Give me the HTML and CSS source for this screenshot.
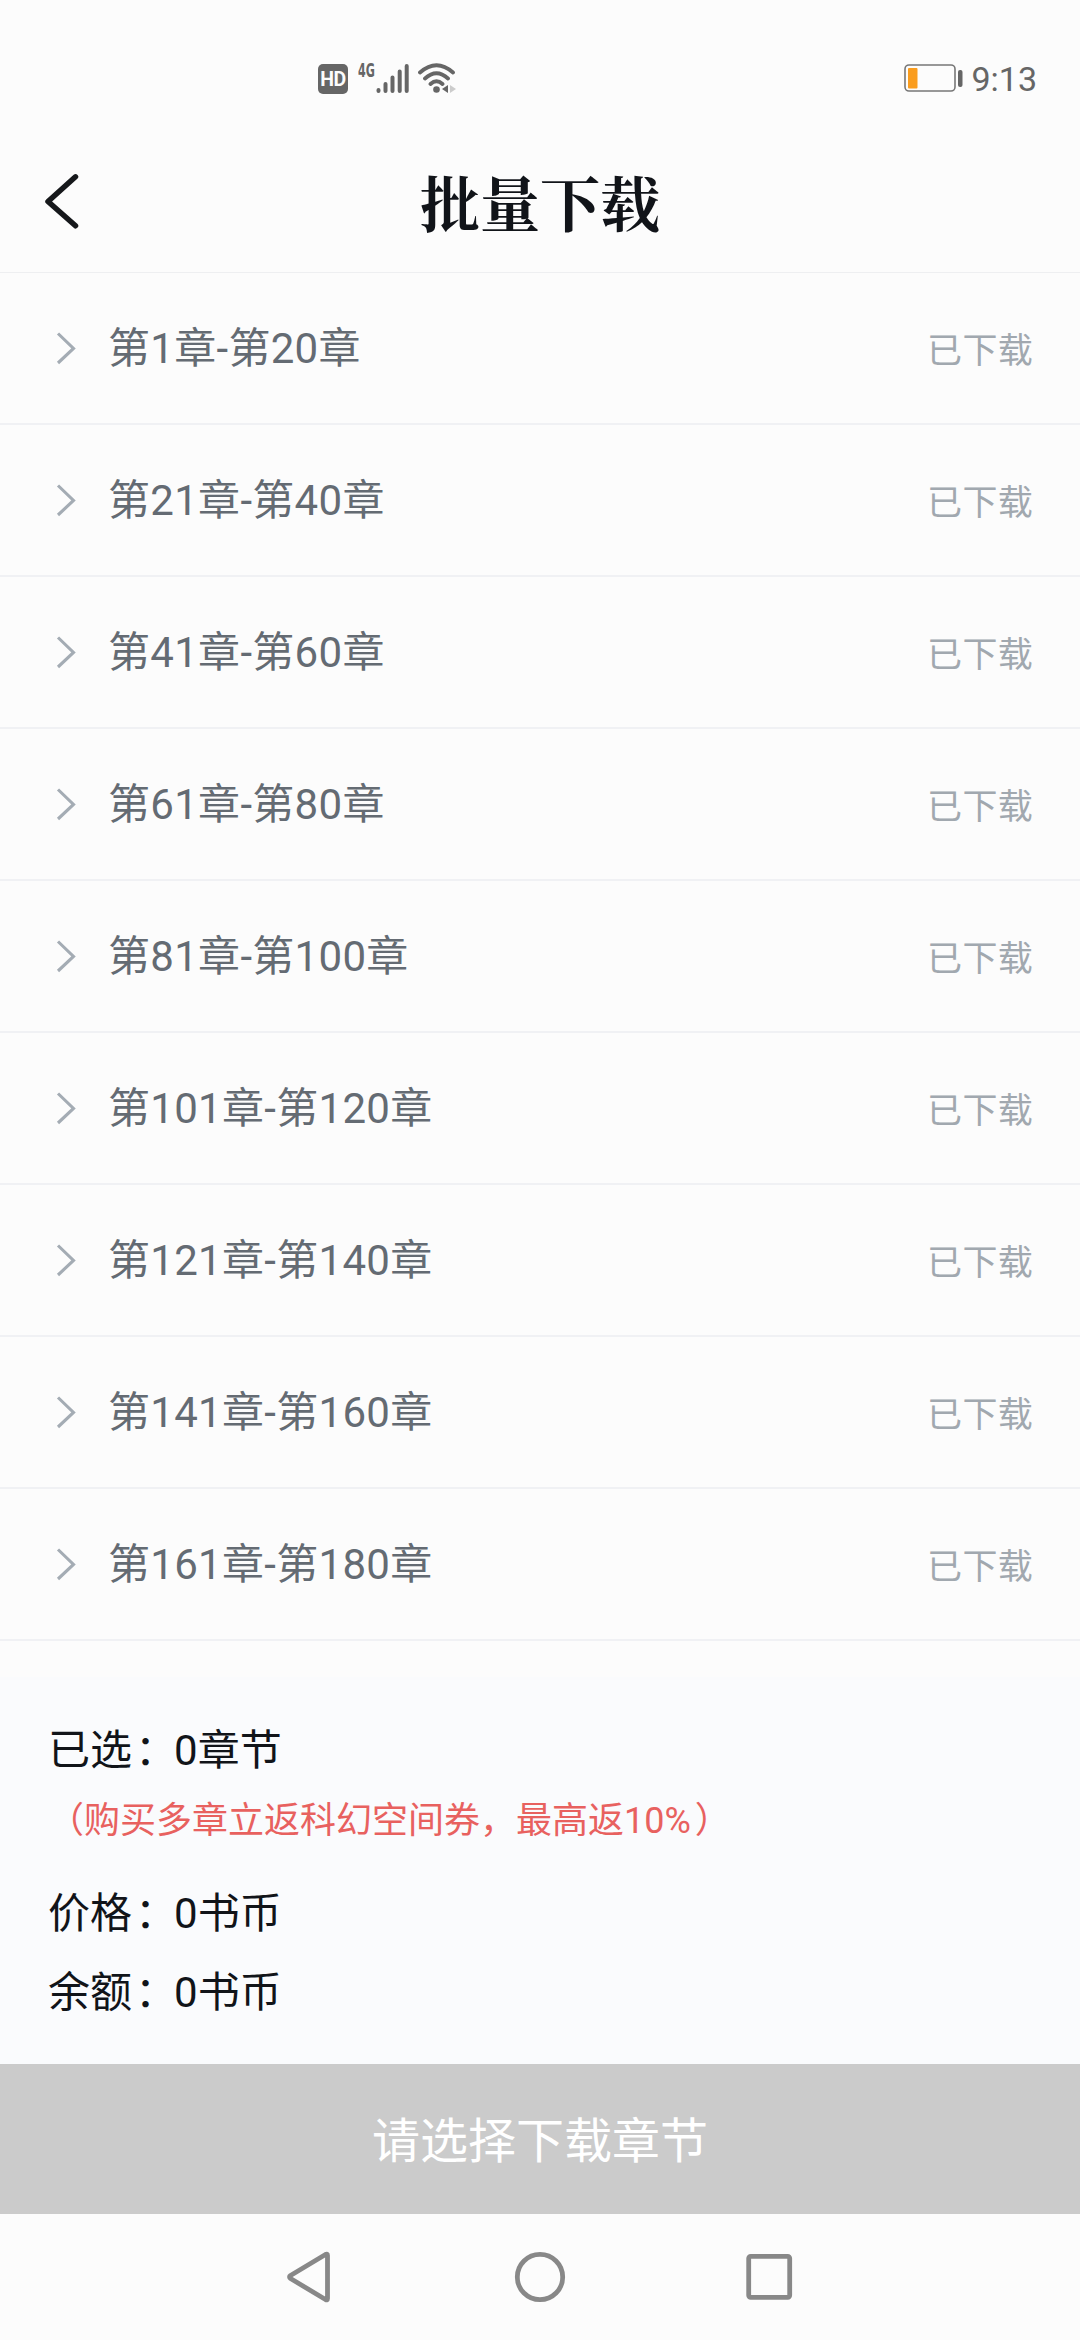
FILE: index.html
```html
<!DOCTYPE html>
<html lang="zh-CN">
<head>
<meta charset="utf-8">
<title>批量下载</title>
<link rel="stylesheet" href="styles.css">
</head>
<body>
<svg class="defs" width="0" height="0" aria-hidden="true">
  <symbol id="chevron" viewBox="0 0 20 34"><path d="M2 2.500 17.500 17.500 2 32"/></symbol>
</svg>
<div class="screen">
  <div class="status">
    <div class="signals">
      <span class="hd">HD</span>
      <span class="net">4G</span>
      <svg class="bars" width="33" height="31" viewBox="0 0 33 31"><path d="M2.500 27v1M9.500 21v7M16.500 14.500v13.500M23.700 8.500v19.500M30.700 3v25"/></svg>
      <svg class="wifi" width="38" height="31" viewBox="0 0 38 31">
        <path class="arc" d="M2 9.500Q18.500-5 35 9.500M7 15.500Q18.500 5 30 15.500M12.500 21Q18.500 15.500 24.500 21"/>
        <circle cx="18.500" cy="26.500" r="3.300"/>
        <path d="M30 22v8l-6-4z"/><path class="faint" d="M32 22v8l6-4z"/>
      </svg>
    </div>
    <div class="power">
      <svg width="60" height="29" viewBox="0 0 60 29">
        <rect class="case" x="1" y="1" width="50" height="26" rx="4"/>
        <rect class="charge" x="4" y="4" width="9.500" height="20.500" rx="1"/>
        <rect class="cap" x="54" y="6" width="4.500" height="17" rx="2"/>
      </svg>
      <span class="time">9:13</span>
    </div>
  </div>
  <header class="header">
    <svg class="back" width="40" height="60" viewBox="0 0 40 60"><path d="M36.500 5.800 9 30.500 36.500 54.800"/></svg>
    <h1>批量下载</h1>
  </header>
  <ul class="list">
    <li><svg class="chev"><use href="#chevron"/></svg><span class="range">第1章-第20章</span><span class="state">已下载</span></li>
    <li><svg class="chev"><use href="#chevron"/></svg><span class="range">第21章-第40章</span><span class="state">已下载</span></li>
    <li><svg class="chev"><use href="#chevron"/></svg><span class="range">第41章-第60章</span><span class="state">已下载</span></li>
    <li><svg class="chev"><use href="#chevron"/></svg><span class="range">第61章-第80章</span><span class="state">已下载</span></li>
    <li><svg class="chev"><use href="#chevron"/></svg><span class="range">第81章-第100章</span><span class="state">已下载</span></li>
    <li><svg class="chev"><use href="#chevron"/></svg><span class="range">第101章-第120章</span><span class="state">已下载</span></li>
    <li><svg class="chev"><use href="#chevron"/></svg><span class="range">第121章-第140章</span><span class="state">已下载</span></li>
    <li><svg class="chev"><use href="#chevron"/></svg><span class="range">第141章-第160章</span><span class="state">已下载</span></li>
    <li><svg class="chev"><use href="#chevron"/></svg><span class="range">第161章-第180章</span><span class="state">已下载</span></li>
  </ul>
  <section class="summary">
    <p class="line">已选<span class="colon">：</span>0章节</p>
    <p class="promo">（购买多章立返科幻空间券，最高返10%<span class="close">）</span></p>
    <p class="line">价格<span class="colon">：</span>0书币</p>
    <p class="line">余额<span class="colon">：</span>0书币</p>
  </section>
  <button class="submit">请选择下载章节</button>
  <nav class="nav">
    <svg width="60" height="60" viewBox="0 0 60 60"><path d="M47.500 8.500Q47.500 6.500 45.500 7.500L10.500 28.500Q8.500 30 10.500 31.500L45.500 52.500Q47.500 53.500 47.500 51.500z"/></svg>
    <svg width="60" height="60" viewBox="0 0 60 60"><circle cx="30" cy="30" r="22.700"/></svg>
    <svg width="60" height="60" viewBox="0 0 60 60"><rect x="9.700" y="9.300" width="41" height="41" rx="2"/></svg>
  </nav>
</div>
</body>
</html>
```
FILE: styles.css
```css
* { box-sizing: border-box; }

body {
  margin: 0;
  background: #fcfcfc;
  font-family: Roboto, "Noto Sans CJK SC", sans-serif;
}

.defs { display: block; }

.screen {
  width: 1080px;
  height: 2340px;
  display: flex;
  flex-direction: column;
  overflow: hidden;
}

.status {
  height: 130px;
  padding: 0 43px 0 318px;
  display: flex;
  justify-content: space-between;
  color: #666;
}

.signals { display: flex; padding-top: 63px; }

.hd {
  width: 30px;
  height: 30px;
  margin-top: 1px;
  border-radius: 5px;
  background: #666;
  color: #fcfcfc;
  font: bold 19.5px/31px Roboto, sans-serif;
  text-align: center;
  letter-spacing: -0.5px;
}

.net {
  width: 17px;
  height: 14px;
  margin-left: 10px;
  font: bold 19px/15px "DejaVu Sans Condensed", "DejaVu Sans", sans-serif;
  transform: scaleX(0.65);
  transform-origin: left;
}

.bars { margin-left: 1px; fill: none; stroke: #666; stroke-width: 4; stroke-linecap: round; }
.wifi { margin-left: 9px; fill: #666; }
.wifi .arc { fill: none; stroke: #666; stroke-width: 3.8; stroke-linecap: round; }
.wifi .faint { fill: #ccc; }

.power { display: flex; padding-top: 64px; }
.power .case { fill: none; stroke: #777; stroke-width: 1.6; }
.power .charge { fill: #fa9d1e; }
.power .cap { fill: #666; }
.time { margin-left: 7px; font-size: 34px; line-height: 30px; }

.header {
  height: 143px;
  border-bottom: 1px solid #eeeff1;
  display: grid;
  grid-template-columns: 120px 1fr 120px;
  align-items: center;
}

.back {
  margin-left: 39px;
  fill: none;
  stroke: #16181b;
  stroke-width: 5.5;
  stroke-linecap: round;
  stroke-linejoin: round;
}

.header h1 {
  margin: 0;
  text-align: center;
  color: #111419;
  font: bold 60px/80px "Noto Serif CJK SC", "Noto Serif SC", "Source Han Serif SC", "Noto Sans CJK SC", serif;
}

.list { list-style: none; margin: 0; padding: 0; height: 1404px; }

.list li {
  height: 152px;
  padding: 0 47px 0 56px;
  border-bottom: 2px solid #f0f1f4;
  display: flex;
  align-items: center;
}

.chev {
  width: 20px;
  height: 34px;
  fill: none;
  stroke: #a4acb4;
  stroke-width: 3.1;
}

.range {
  flex: 1;
  margin-left: 32px;
  padding-bottom: 8px;
  color: #646b73;
  font-size: 42px;
  letter-spacing: 0.3px;
}

.state { color: #a1a8af; font-size: 35px; letter-spacing: 0.3px; padding-bottom: 2px; }

.summary {
  height: 387px;
  padding: 42px 48px 0;
  background: #fafbfd;
}

.summary p { margin: 0; }
.line { height: 79px; color: #111419; font-size: 42px; line-height: 64px; }
.colon { margin: 0 -3px 0 3px; }
.promo { height: 84px; margin: 0; color: #e8615f; font-size: 36px; line-height: 46px; }
.close { margin-left: 4px; }

.submit {
  height: 150px;
  padding: 6px 0 0;
  border: 0;
  background: #cbcbcb;
  color: #fff;
  font: 48px/144px Roboto, "Noto Sans CJK SC", sans-serif;
}

.nav {
  flex: 1;
  padding: 0 281px 0 280px;
  display: flex;
  align-items: center;
  justify-content: space-between;
}

.nav svg { fill: none; stroke: #888; stroke-width: 4.8; stroke-linejoin: round; }
```
